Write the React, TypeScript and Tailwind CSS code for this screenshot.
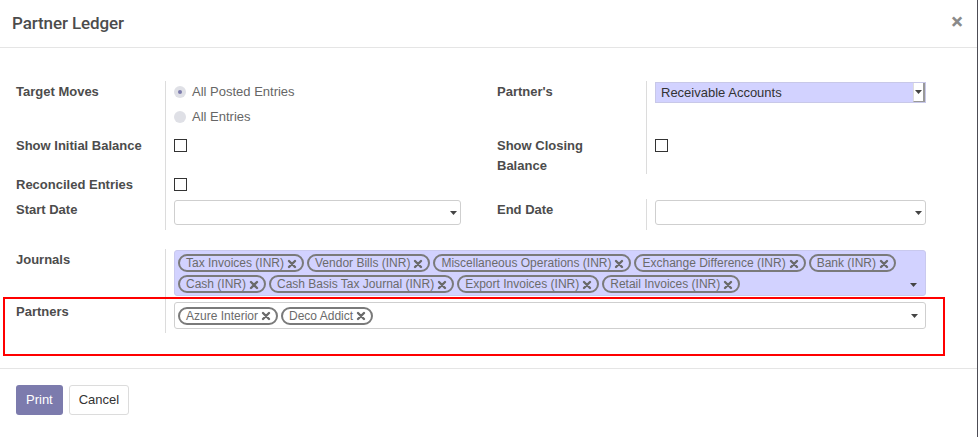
import React from "react";

const Caret = () => (
  <svg width="7" height="4" viewBox="0 0 7 4" className="block">
    <path d="M0 0 L7 0 L3.5 4 Z" fill="#444" />
  </svg>
);

const TagX = () => (
  <svg width="10" height="10" viewBox="0 0 10 10" className="block">
    <path d="M2 2 L8 8 M8 2 L2 8" stroke="#6a6a6a" strokeWidth="2.4" strokeLinecap="round" />
  </svg>
);

const Tag = ({ label }: { label: string }) => (
  <span className="inline-flex items-center h-[18px] rounded-full border-2 border-[#7a7a7a] pl-[6px] pr-[5px] text-[12px] leading-none text-[#6b6b6b] whitespace-nowrap">
    <span>{label}</span>
    <span className="ml-[3px] mt-[1px]">
      <TagX />
    </span>
  </span>
);

const Checkbox = () => <div className="w-[13px] h-[13px] border border-[#333] bg-white" />;

const Label = ({ children, className = "" }: { children: React.ReactNode; className?: string }) => (
  <div className={"border-r border-[#dcdcdc] pt-[1px] text-[13px] leading-5 font-bold text-[#4c4c4c] " + className}>{children}</div>
);

const DateInput = ({ width }: { width: string }) => (
  <div className={"h-[25px] mt-[1px] border border-[#cfcfcf] rounded-[3px] bg-white flex items-center justify-end pr-[3px] " + width}>
    <Caret />
  </div>
);

export default function App() {
  const journals1 = ["Tax Invoices (INR)", "Vendor Bills (INR)", "Miscellaneous Operations (INR)", "Exchange Difference (INR)", "Bank (INR)"];
  const journals2 = ["Cash (INR)", "Cash Basis Tax Journal (INR)", "Export Invoices (INR)", "Retail Invoices (INR)"];
  return (
    <div className="w-[979px] h-[437px] bg-white relative overflow-hidden" style={{ fontFamily: "'Liberation Sans', Arial, sans-serif" }}>
      <div className="w-[978px] h-full border-r border-[#4d4d55] flex flex-col">
        {/* Header */}
        <div className="h-[48px] shrink-0 border-b border-[#e5e5e5] flex items-center justify-between pl-3 pr-[14px]">
          <div className="text-[17px] font-medium text-[#4c4c4c] tracking-[-0.1px]" style={{ fontFamily: "Roboto, sans-serif" }}>Partner Ledger</div>
          <div className="text-[22px] font-bold text-[#8a8a8a] leading-none -mt-[3px]" style={{ fontFamily: "Roboto, sans-serif" }}>×</div>
        </div>

        {/* Body */}
        <div className="h-[321px] shrink-0 border-b border-[#e5e5e5] pt-[33px] px-4 text-[13px]">
          <div className="grid grid-cols-[150px_331px_150px_1fr] grid-rows-[54px_39px_25px_31px]">
            {/* Row A */}
            <Label>Target Moves</Label>
            <div className="pl-2 pt-[1px] flex flex-col gap-[5px]">
              <div className="flex items-center h-5">
                <div className="w-[12px] h-[12px] rounded-full bg-[#dfe0e6] flex items-center justify-center">
                  <div className="w-[4px] h-[4px] rounded-full bg-[#7c7bad]" />
                </div>
                <span className="ml-[6px] text-[#666]">All Posted Entries</span>
              </div>
              <div className="flex items-center h-5">
                <div className="w-[12px] h-[12px] rounded-full bg-[#dfe0e6]" />
                <span className="ml-[6px] text-[#666]">All Entries</span>
              </div>
            </div>
            <Label>Partner's</Label>
            <div className="pl-2">
              <div className="w-[271px] h-[21px] mt-[1px] bg-[#d2d2ff] border border-[#c8c8e8] flex items-stretch">
                <div className="flex-1 pl-[5px] text-[13px] leading-[20px] text-[#333]">Receivable Accounts</div>
                <div className="w-[12px] bg-white border-l border-[#ddd] border-r-2 border-r-[#999] border-b border-b-[#999] flex items-center justify-center">
                  <Caret />
                </div>
              </div>
            </div>

            {/* Row B */}
            <Label>Show Initial Balance</Label>
            <div className="pl-2 pt-[4px]">
              <Checkbox />
            </div>
            <Label>
              Show Closing
              <br />
              Balance
            </Label>
            <div className="pl-2 pt-[4px]">
              <Checkbox />
            </div>

            {/* Row C */}
            <Label>Reconciled Entries</Label>
            <div className="pl-2 pt-[4px]">
              <Checkbox />
            </div>
            <div />
            <div />

            {/* Row D */}
            <Label>Start Date</Label>
            <div className="pl-2">
              <DateInput width="w-[287px]" />
            </div>
            <Label>End Date</Label>
            <div className="pl-2">
              <DateInput width="w-[271px]" />
            </div>
          </div>

          {/* Journals */}
          <div className="grid grid-cols-[150px_1fr] mt-[19px] h-[52px]">
            <Label>Journals</Label>
            <div className="pl-2 pr-[35px]">
              <div className="mt-[1px] h-[46px] bg-[#d2d2ff] border border-[#c9c9ee] rounded-[3px] pl-[3px] pt-[3px] relative flex flex-col gap-[3px]">
                <div className="flex gap-[3px]">
                  {journals1.map((j) => (
                    <Tag key={j} label={j} />
                  ))}
                </div>
                <div className="flex gap-[3px]">
                  {journals2.map((j) => (
                    <Tag key={j} label={j} />
                  ))}
                </div>
                <div className="absolute right-[8px] bottom-[8px]">
                  <Caret />
                </div>
              </div>
            </div>
          </div>

          {/* Partners */}
          <div className="grid grid-cols-[150px_1fr] h-[32px]">
            <Label>Partners</Label>
            <div className="pl-2 pr-[35px]">
              <div className="mt-[1px] h-[27px] bg-white border border-[#cfcfcf] rounded-[3px] pl-[3px] flex items-center justify-between pr-[7px]">
                <div className="flex gap-[3px]">
                  <Tag label="Azure Interior" />
                  <Tag label="Deco Addict" />
                </div>
                <Caret />
              </div>
            </div>
          </div>
        </div>

        {/* Footer */}
        <div className="pt-4 px-4 flex gap-[6px] text-[13px]">
          <button className="h-[30px] px-[10px] rounded-[3px] bg-[#7c7bad] text-white">Print</button>
          <button className="h-[30px] px-[9px] rounded-[3px] bg-white border border-[#dcdcdc] text-[#333]">Cancel</button>
        </div>
      </div>

      {/* Annotation box */}
      <div className="absolute left-[3px] top-[297px] w-[942px] h-[59px] border-2 border-[#ff0000]" />
    </div>
  );
}
